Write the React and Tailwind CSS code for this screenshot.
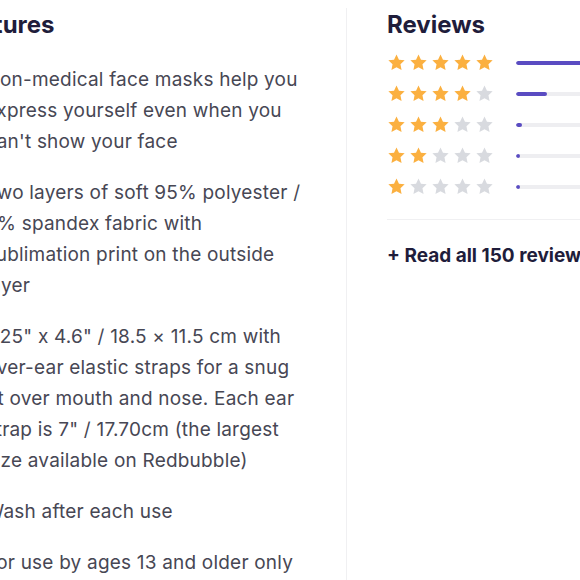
const features = [
  "Non-medical face masks help you express yourself even when you can't show your face",
  "Two layers of soft 95% polyester / 5% spandex fabric with sublimation print on the outside layer",
  "7.25\" x 4.6\" / 18.5 × 11.5 cm with over-ear elastic straps for a snug fit over mouth and nose. Each ear strap is 7\" / 17.70cm (the largest size available on Redbubble)",
  "Wash after each use",
  "For use by ages 13 and older only",
];

const ratings = [
  { stars: 5, pct: 92 },
  { stars: 4, pct: 28 },
  { stars: 3, pct: 5 },
  { stars: 2, pct: 3 },
  { stars: 1, pct: 3 },
];

function StarIcon({ filled }) {
  return (
    <svg viewBox="0 0 24 24" className="w-[19px] h-[19px] shrink-0">
      <path
        d="M12 1.8l3.1 6.6 7.2.9-5.3 5 1.4 7.1L12 17.9l-6.4 3.5 1.4-7.1-5.3-5 7.2-.9z"
        fill={filled ? "#fbb040" : "#d8dadf"}
      />
    </svg>
  );
}

export default function App() {
  return (
    <div className="flex h-[580px] overflow-hidden bg-white font-['Inter',sans-serif]">
      {/* Features column */}
      <div className="w-[394px] shrink-0 -ml-[48px] pt-[9px]">
        <h2 className="text-[24px] leading-[32px] font-bold text-[#1f1d3b]">Features</h2>
        <ul className="mt-[23px] pl-[33.5px] pr-[39.5px] flex flex-col gap-[20px] text-[19px] tracking-[0.2px] leading-[31px] text-[#474754]">
          {features.map((f) => (
            <li key={f}>{f}</li>
          ))}
        </ul>
      </div>

      {/* Reviews column */}
      <div className="w-[300px] shrink-0 mt-2 border-l border-[#f0f0f2] pl-[40px]">
        <h2 className="pt-px text-[24px] leading-[32px] font-bold text-[#1f1d3b]">Reviews</h2>
        <div className="mt-[6px] flex flex-col">
          {ratings.map((r) => (
            <div key={r.stars} className="h-[31px] flex items-center">
              <div className="flex gap-[3px]">
                {[1, 2, 3, 4, 5].map((i) => (
                  <StarIcon key={i} filled={i <= r.stars} />
                ))}
              </div>
              <div className="ml-[22px] w-[110px] h-[4px] rounded-full bg-[#eeeef1] overflow-hidden">
                <div
                  className="h-full rounded-full bg-[#5a4cc2] min-w-[4px]"
                  style={{ width: `${r.pct}%` }}
                />
              </div>
            </div>
          ))}
        </div>
        <div className="mt-[17px] border-t border-[#f0f0f2]" />
        <p className="mt-[22px] text-[19px] leading-[28px] font-bold text-[#1f1d3b] whitespace-nowrap">
          + Read all 150 reviews
        </p>
      </div>
    </div>
  );
}
